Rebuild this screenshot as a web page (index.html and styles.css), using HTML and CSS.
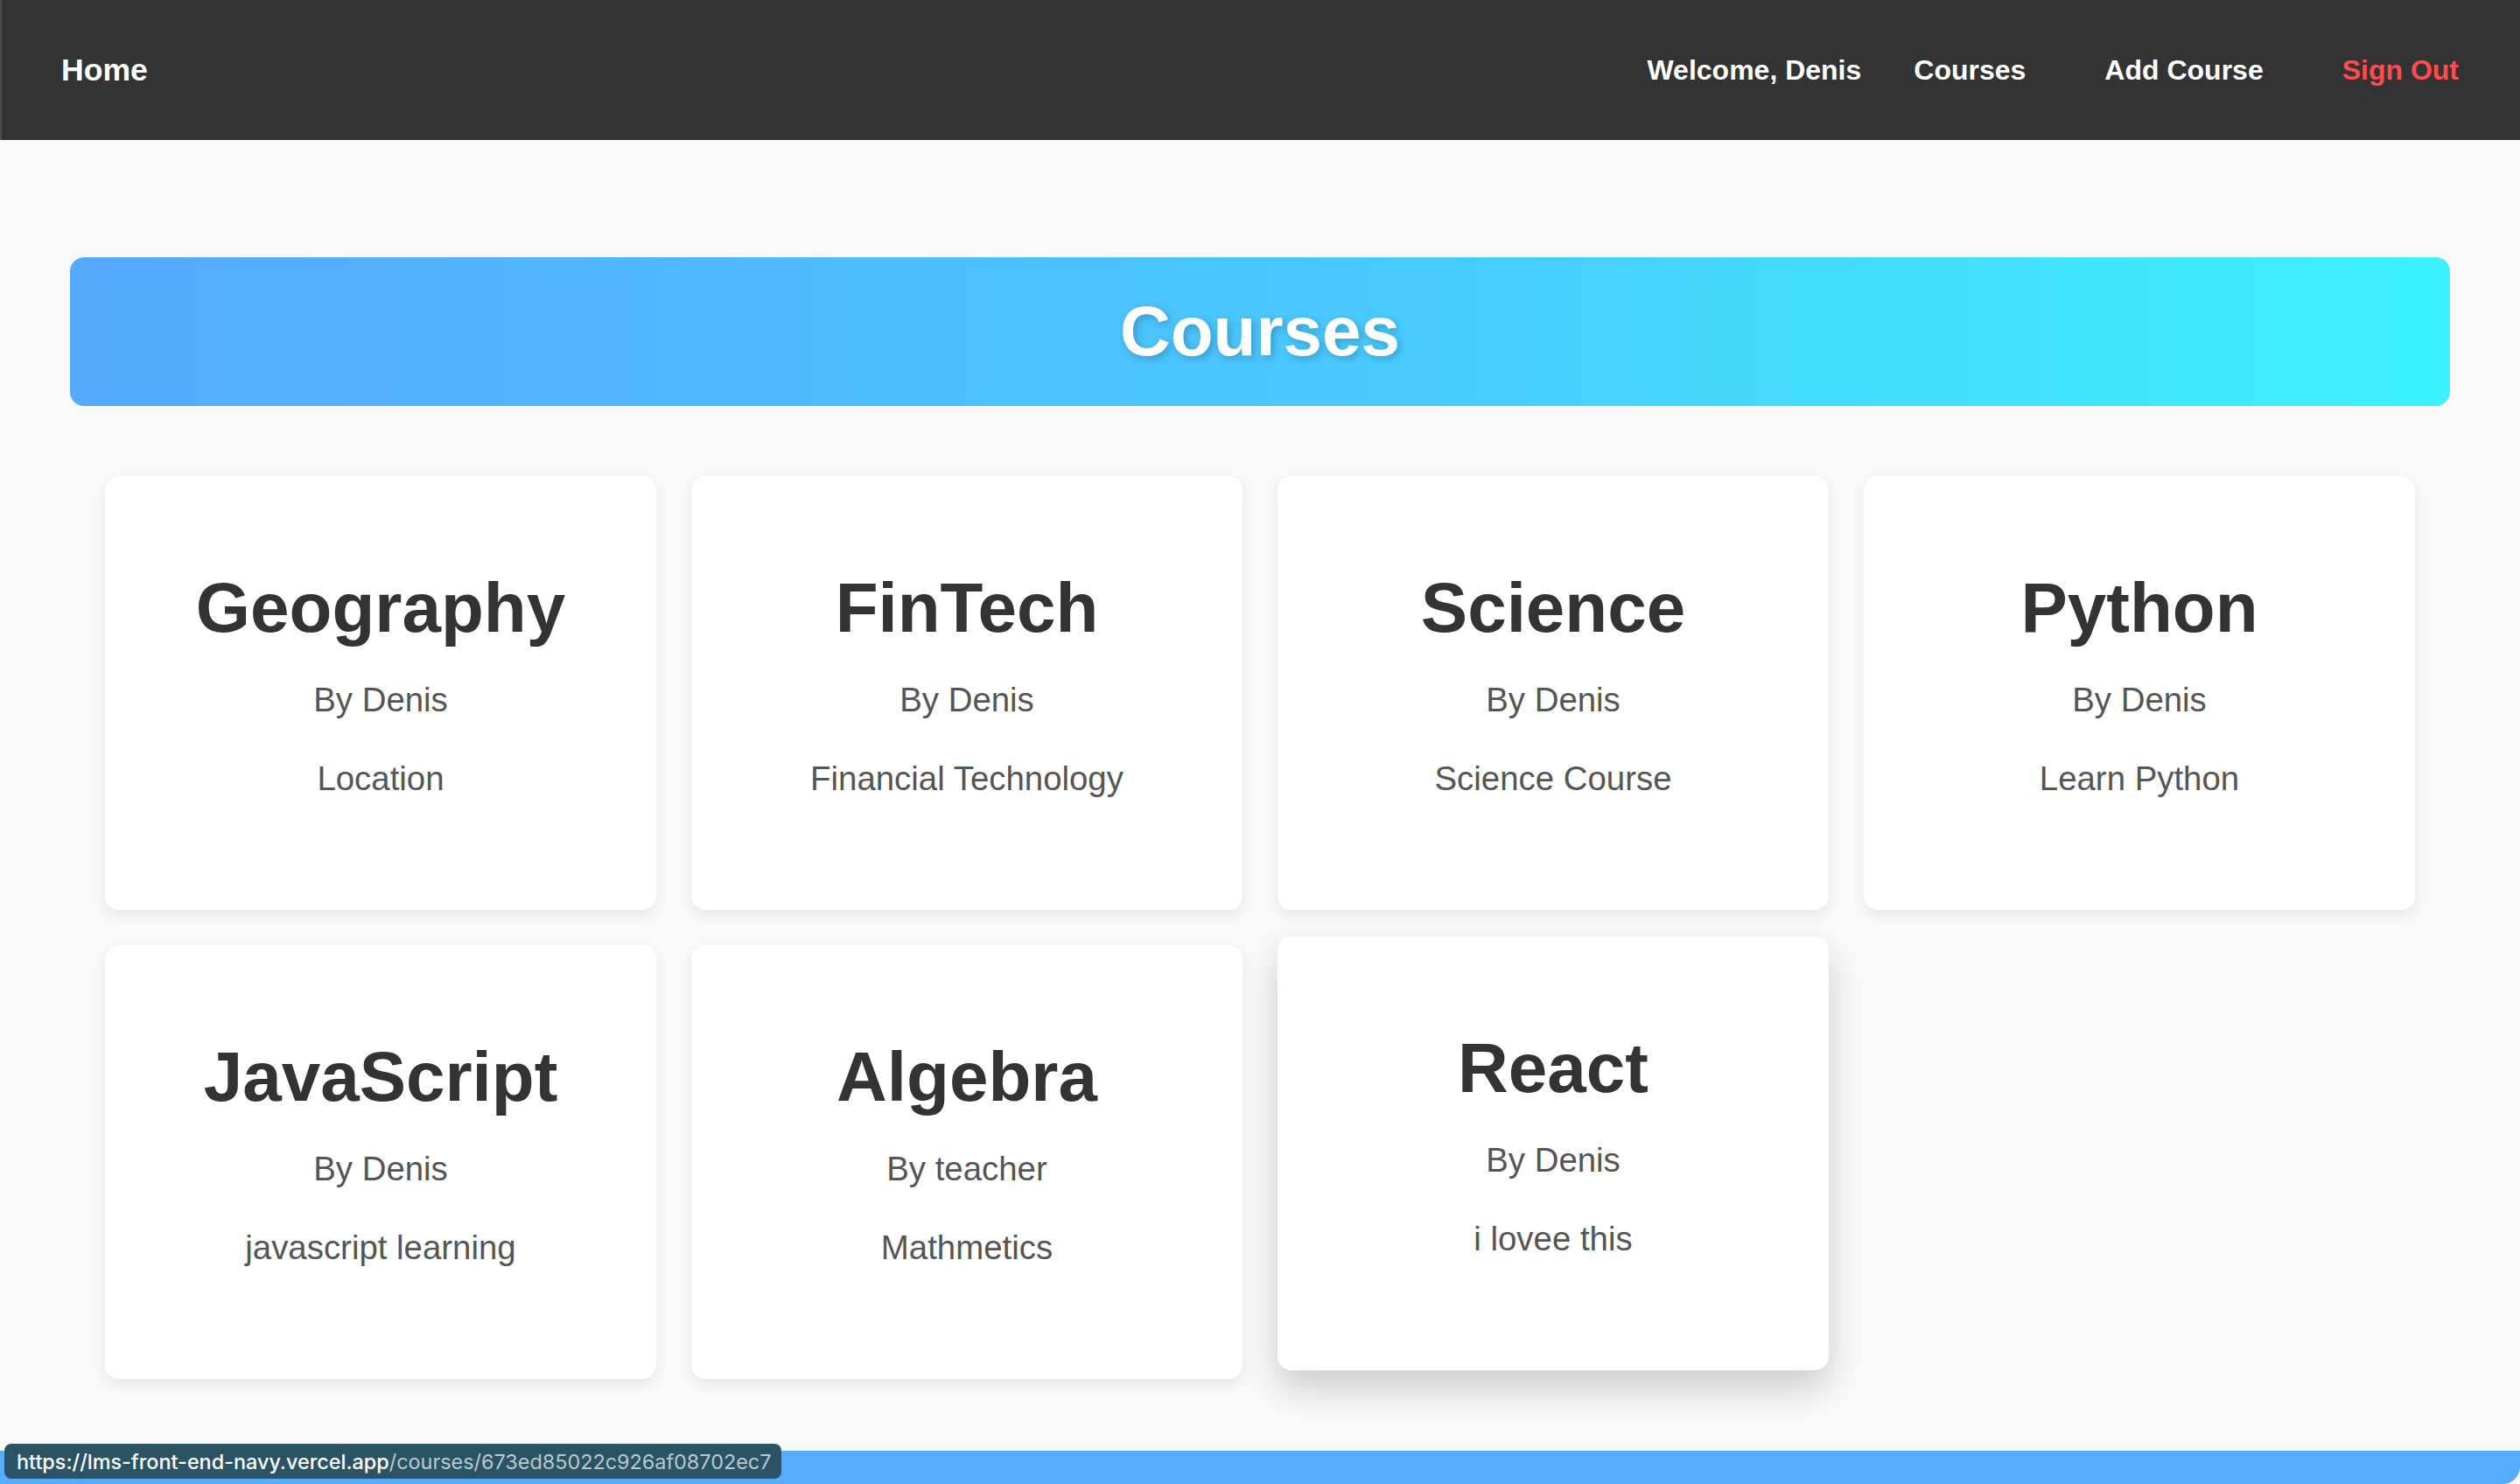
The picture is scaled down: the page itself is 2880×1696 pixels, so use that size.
FILE: index.html
```html
<!DOCTYPE html>
<html lang="en">
<head>
<meta charset="utf-8">
<title>Courses</title>
<link rel="stylesheet" href="styles.css">
</head>
<body>
<nav class="navbar">
  <a class="nav-home" href="#">Home</a>
  <div class="nav-right">
    <span class="nav-welcome">Welcome, Denis</span>
    <a class="nav-link" href="#">Courses</a>
    <a class="nav-link" href="#">Add Course</a>
    <a class="nav-link nav-signout" href="#">Sign Out</a>
  </div>
</nav>
<main class="page">
  <header class="banner">
    <h1 class="banner-title">Courses</h1>
  </header>
  <section class="course-grid">
    <article class="course-card">
      <h2 class="course-title">Geography</h2>
      <p class="course-meta">By Denis</p>
      <p class="course-meta">Location</p>
    </article>
    <article class="course-card">
      <h2 class="course-title">FinTech</h2>
      <p class="course-meta">By Denis</p>
      <p class="course-meta">Financial Technology</p>
    </article>
    <article class="course-card">
      <h2 class="course-title">Science</h2>
      <p class="course-meta">By Denis</p>
      <p class="course-meta">Science Course</p>
    </article>
    <article class="course-card">
      <h2 class="course-title">Python</h2>
      <p class="course-meta">By Denis</p>
      <p class="course-meta">Learn Python</p>
    </article>
    <article class="course-card">
      <h2 class="course-title">JavaScript</h2>
      <p class="course-meta">By Denis</p>
      <p class="course-meta">javascript learning</p>
    </article>
    <article class="course-card">
      <h2 class="course-title">Algebra</h2>
      <p class="course-meta">By teacher</p>
      <p class="course-meta">Mathmetics</p>
    </article>
    <article class="course-card course-card-hover">
      <h2 class="course-title">React</h2>
      <p class="course-meta">By Denis</p>
      <p class="course-meta">i lovee this</p>
    </article>
  </section>
</main>
<footer class="footer-strip"></footer>
<div class="status-url"><span class="status-host">https://lms-front-end-navy.vercel.app</span><span class="status-path">/courses/673ed85022c926af08702ec7</span></div>
</body>
</html>
```
FILE: styles.css
```css
* {
  box-sizing: border-box;
}

html, body {
  margin: 0;
  padding: 0;
}

body {
  background: #f9f9f9;
  font-family: "Liberation Sans", Arial, sans-serif;
  color: #333;
  overflow: hidden;
}

.navbar {
  height: 160px;
  background: #333333;
  display: flex;
  align-items: center;
  justify-content: space-between;
  padding: 0 40px 0 38px;
  border-left: 2px solid #4a4a4a;
}

.nav-home {
  color: #ffffff;
  text-decoration: none;
  font-weight: bold;
  font-size: 35.6px;
  padding: 0 30px;
}

.nav-right {
  display: flex;
  align-items: center;
  gap: 30px;
}

.nav-welcome {
  color: #ffffff;
  font-weight: bold;
  font-size: 32px;
}

.nav-link {
  color: #ffffff;
  text-decoration: none;
  font-weight: bold;
  font-size: 32px;
  padding: 0 30px;
}

.nav-signout {
  color: #ff4d4f;
}

.page {
  padding: 134px 80px 82px;
}

.banner {
  background: linear-gradient(90deg, #55a9fe 0%, #4ac6fd 50%, #3cf1fd 100%);
  border-radius: 16px;
  padding: 39px 0;
  text-align: center;
}

.banner-title {
  margin: 0;
  color: #ffffff;
  font-size: 80px;
  line-height: 92px;
  font-weight: bold;
  text-shadow: 3px 3px 8px rgba(0, 0, 0, 0.22);
}

.course-grid {
  display: grid;
  grid-template-columns: repeat(4, 1fr);
  gap: 40px;
  padding: 0 40px;
  margin-top: 80px;
}

.course-card {
  background: #ffffff;
  border-radius: 16px;
  height: 496px;
  padding: 40px;
  text-align: center;
  box-shadow: 0 6px 16px rgba(0, 0, 0, 0.08);
}

.course-card-hover {
  transform: translateY(-10px);
  box-shadow: 0 20px 40px rgba(0, 0, 0, 0.18);
}

.course-title {
  margin: 66px 0 0;
  font-size: 80px;
  line-height: 90px;
  font-weight: bold;
  color: #333333;
}

.course-meta {
  margin: 29px 0 0;
  font-size: 38.4px;
  line-height: 61px;
  color: #555555;
}

.footer-strip {
  height: 38px;
  background: #57acfe;
  border-bottom-right-radius: 20px;
}

.status-url {
  position: fixed;
  left: 5px;
  bottom: 6px;
  height: 40px;
  display: flex;
  align-items: center;
  padding: 0 12px 0 14px;
  background: #2a5465;
  border-radius: 8px;
  font-family: Inter, "Liberation Sans", sans-serif;
  font-size: 23.4px;
  white-space: nowrap;
}

.status-host {
  color: #ffffff;
  font-weight: 500;
}

.status-path {
  color: #b9c8cf;
}
```
